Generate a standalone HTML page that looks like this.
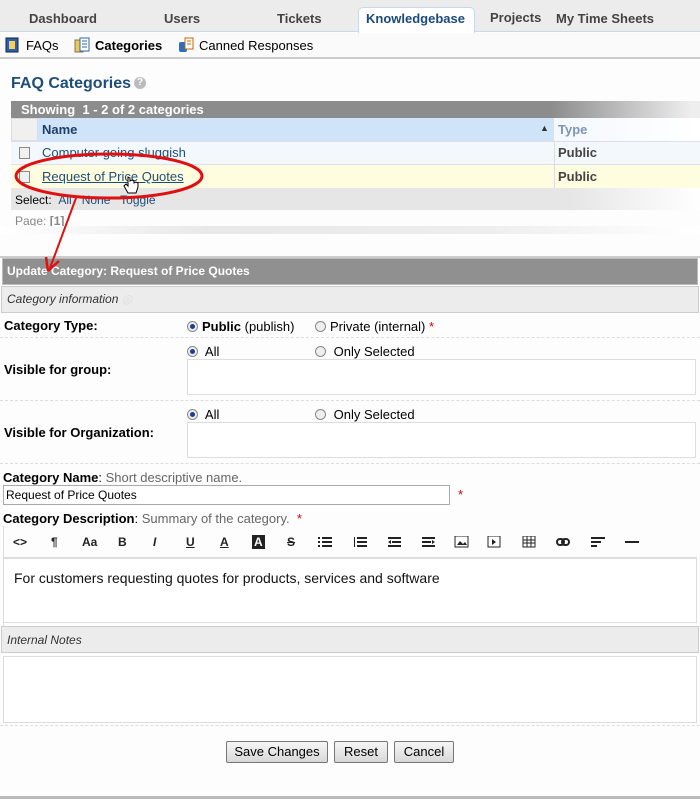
<!DOCTYPE html>
<html><head><meta charset="utf-8">
<style>
*{box-sizing:border-box;margin:0;padding:0}
body{width:700px;height:799px;background:#fdfdfd;font-family:"Liberation Sans",Arial,sans-serif;font-size:13px;color:#000;position:relative;overflow:hidden}
.a{position:absolute;white-space:nowrap}
.tab{position:absolute;top:11px;font-size:13px;font-weight:bold;color:#444}
.rad{display:inline-block;width:11px;height:11px;border-radius:50%;border:1px solid #888;background:#eee;vertical-align:-1px;margin-right:4px;position:relative}
.rad.on::after{content:"";position:absolute;left:2px;top:2px;width:5px;height:5px;border-radius:50%;background:#1a3d8f}
.chk{position:absolute;width:11px;height:12px;border:1px solid #888;background:#f0f0f0}
.box{position:absolute;border:1px solid #ddd;background:#fff}
.dash{position:absolute;left:0;width:700px;border-top:1px dashed #ddd}
.tb{position:absolute;top:535px;font-size:12px;font-weight:bold;color:#222}
.btn{position:absolute;top:741px;height:22px;border:1px solid #777;border-radius:2px;background:linear-gradient(#f6f6f6,#d8d8d8);font-size:13px;text-align:center;line-height:20px}
</style></head><body>
<div class="a" style="left:0;top:0;width:700px;height:32px;background:#ececec;border-bottom:1px solid #c8d8e8"></div>
<div class="tab" style="left:29px">Dashboard</div>
<div class="tab" style="left:164px">Users</div>
<div class="tab" style="left:277px">Tickets</div>
<div class="a" style="left:358px;top:7px;width:117px;height:26px;background:#fff;border:1px solid #c8d8e8;border-bottom:none;border-radius:5px 5px 0 0"></div>
<div class="tab" style="left:366px;color:#1a4a7a">Knowledgebase</div>
<div class="tab" style="left:490px;top:10px">Projects</div>
<div class="tab" style="left:556px">My Time Sheets</div>
<div class="a" style="left:0;top:33px;width:700px;height:26px;background:#fafafa;border-bottom:2px solid #ccc"></div>
<svg class="a" style="left:5px;top:37px" width="14" height="16"><rect x="1" y="1" width="12" height="14" fill="#2b5fb0" stroke="#123"/><rect x="4" y="4" width="6" height="8" fill="#f5d060"/></svg>
<div class="a" style="left:26px;top:38px">FAQs</div>
<svg class="a" style="left:74px;top:37px" width="16" height="16"><rect x="1" y="3" width="8" height="12" fill="#e8c860" stroke="#875"/><rect x="6" y="1" width="9" height="13" fill="#fff" stroke="#36a"/><path d="M8 4h5M8 7h5M8 10h5" stroke="#36a"/></svg>
<div class="a" style="left:95px;top:38px;font-weight:bold">Categories</div>
<svg class="a" style="left:178px;top:37px" width="16" height="16"><rect x="1" y="5" width="8" height="10" rx="2" fill="#2b6fc0"/><rect x="7" y="1" width="8" height="11" fill="#fff" stroke="#c60"/><path d="M9 4h4M9 7h4" stroke="#c60"/></svg>
<div class="a" style="left:199px;top:38px">Canned Responses</div>
<div class="a" style="left:11px;top:75px;font-size:16px;font-weight:bold;color:#1f4d7a">FAQ Categories</div>
<div class="a" style="left:134px;top:77px;width:12px;height:12px;border-radius:50%;background:#bbb;color:#fff;font-size:10px;font-weight:bold;text-align:center;line-height:12px">?</div>
<div class="a" style="left:11px;top:101px;width:689px;height:17px;background:linear-gradient(90deg,#8c8c8c 0,#8c8c8c 540px,#eee 680px)"></div>
<div class="a" style="left:21px;top:102px;color:#fff;font-weight:bold">Showing&nbsp; 1 - 2 of 2 categories</div>
<div class="a" style="left:11px;top:118px;width:27px;height:23px;background:#f0f0f0;border:1px solid #ddd"></div>
<div class="a" style="left:38px;top:118px;width:516px;height:23px;background:#cfe4f8"></div>
<div class="a" style="left:42px;top:122px;font-weight:bold;color:#1f3f6a">Name</div>
<div class="a" style="left:540px;top:123px;font-size:9px;color:#333">▲</div>
<div class="a" style="left:554px;top:118px;width:146px;height:23px;background:linear-gradient(90deg,#f4f8fc,#fff)"></div>
<div class="a" style="left:558px;top:122px;color:#7e95b5;font-weight:bold">Type</div>
<div class="a" style="left:11px;top:141px;width:689px;height:23px;background:#f3f8fc;border-top:1px solid #dde"></div>
<div class="chk" style="left:19px;top:147px"></div>
<div class="a" style="left:42px;top:145px;color:#1f4d7a">Computer going sluggish</div>
<div class="a" style="left:558px;top:145px;font-weight:bold;color:#444">Public</div>
<div class="a" style="left:11px;top:164px;width:689px;height:24px;background:#fffde0;border-top:1px solid #dde"></div>
<div class="chk" style="left:19px;top:171px"></div>
<div class="a" style="left:42px;top:169px;color:#1f4d7a;text-decoration:underline">Request of Price Quotes</div>
<div class="a" style="left:558px;top:169px;font-weight:bold;color:#444">Public</div>
<div class="a" style="left:554px;top:141px;width:1px;height:47px;background:#ddd"></div>
<div class="a" style="left:11px;top:188px;width:689px;height:22px;background:linear-gradient(90deg,#e6e6e6,#e6e6e6 560px,#fff)"></div>
<div class="a" style="left:15px;top:193px;font-size:12px">Select: &nbsp;<span style="color:#1f4d7a">All &nbsp; None &nbsp; Toggle</span></div>
<div class="a" style="left:15px;top:214px;font-size:12px;color:#888">Page: <b>[1]</b></div>
<div class="a" style="left:0;top:226px;width:700px;height:8px;background:linear-gradient(90deg,#fff,#e8e8e8 30%,#eee 70%,#fff)"></div>
<div class="a" style="left:0;top:256px;width:700px;height:2px;background:#ccc"></div>
<div class="a" style="left:2px;top:258px;width:696px;height:27px;background:#909090;border:1px solid #bbb"></div>
<div class="a" style="left:7px;top:264px;color:#fff;font-weight:bold;font-size:12px">Update Category: Request of Price Quotes</div>
<svg class="a" style="left:0;top:140px;z-index:5" width="220" height="135">
<ellipse cx="109" cy="36" rx="93" ry="22" fill="none" stroke="#e01010" stroke-width="3"/>
<path d="M76 58 L50 128" stroke="#e01010" stroke-width="2"/>
<path d="M48 131 L46 117 M48 131 L59 121" stroke="#e01010" stroke-width="2.5" fill="none"/>
</svg>
<svg class="a" style="left:123px;top:176px;z-index:6" width="16" height="20"><path d="M5 1v9l-2-2-2 2 4 7h8l2-6v-4l-2-1-2 1V5l-2-1-2 1V2z" fill="#fff" stroke="#000"/></svg>
<div class="a" style="left:1px;top:286px;width:698px;height:27px;background:#ececec;border:1px solid #ccc"></div>
<div class="a" style="left:7px;top:292px;font-style:italic;font-size:12px;color:#333">Category information <span style="color:#ddd">◎</span></div>
<div class="a" style="left:4px;top:318px;font-weight:bold">Category Type:</div>
<div class="a" style="left:187px;top:319px"><span class="rad on"></span><b>Public</b> (publish)</div>
<div class="a" style="left:315px;top:319px"><span class="rad"></span>Private (internal) <span style="color:#d00">*</span></div>
<div class="dash" style="top:337px"></div>
<div class="a" style="left:187px;top:344px"><span class="rad on"></span> All</div>
<div class="a" style="left:315px;top:344px"><span class="rad"></span> Only Selected</div>
<div class="box" style="left:187px;top:359px;width:509px;height:36px"></div>
<div class="a" style="left:4px;top:362px;font-weight:bold">Visible for group:</div>
<div class="dash" style="top:400px"></div>
<div class="a" style="left:187px;top:407px"><span class="rad on"></span> All</div>
<div class="a" style="left:315px;top:407px"><span class="rad"></span> Only Selected</div>
<div class="box" style="left:187px;top:422px;width:509px;height:36px"></div>
<div class="a" style="left:4px;top:425px;font-weight:bold">Visible for Organization:</div>
<div class="dash" style="top:463px"></div>
<div class="a" style="left:3px;top:470px"><b>Category Name</b>: <span style="color:#666">Short descriptive name.</span></div>
<div class="a" style="left:3px;top:485px;width:447px;height:20px;border:1px solid #aaa;background:#fff;padding:2px 2px;font-size:12px">Request of Price Quotes</div>
<div class="a" style="left:458px;top:487px;color:#d00">*</div>
<div class="a" style="left:3px;top:511px"><b>Category Description</b>: <span style="color:#666">Summary of the category.</span> &nbsp;<span style="color:#d00">*</span></div>
<div class="a" style="left:3px;top:526px;width:1px;height:100px;background:#ddd"></div>
<div class="tb" style="left:13px">&lt;&gt;</div>
<div class="tb" style="left:51px">¶</div>
<div class="tb" style="left:82px">Aa</div>
<div class="tb" style="left:118px">B</div>
<div class="tb" style="left:153px;font-style:italic">I</div>
<div class="tb" style="left:186px;text-decoration:underline">U</div>
<div class="tb" style="left:220px;text-decoration:underline">A</div>
<div class="tb" style="left:252px;background:#222;color:#fff;padding:0 2px">A</div>
<div class="tb" style="left:287px;text-decoration:line-through">S</div>
<svg class="a" style="left:318px;top:536px" width="360" height="12" fill="#222">
<rect x="0" y="1" width="2" height="2"/><rect x="4" y="1" width="10" height="2"/><rect x="0" y="5" width="2" height="2"/><rect x="4" y="5" width="10" height="2"/><rect x="0" y="9" width="2" height="2"/><rect x="4" y="9" width="10" height="2"/>
<rect x="36" y="1" width="1" height="10"/><rect x="39" y="1" width="10" height="2"/><rect x="39" y="5" width="10" height="2"/><rect x="39" y="9" width="10" height="2"/>
<rect x="70" y="1" width="13" height="2"/><rect x="74" y="5" width="9" height="2"/><rect x="70" y="9" width="13" height="2"/><path d="M70 6l3-2v4z"/>
<rect x="104" y="1" width="13" height="2"/><rect x="104" y="5" width="9" height="2"/><rect x="104" y="9" width="13" height="2"/><path d="M117 6l-3-2v4z"/>
<rect x="137" y="0" width="13" height="11" fill="none" stroke="#222"/><path d="M139 9l3-4 3 3 2-2 2 3z"/>
<rect x="170" y="0" width="12" height="11" fill="none" stroke="#222"/><path d="M174 3v6l4-3z"/>
<rect x="205" y="0" width="12" height="11" fill="none" stroke="#222"/><path d="M205 4h12M205 7h12M209 0v11M213 0v11" stroke="#222"/>
<rect x="239" y="3" width="7" height="6" rx="3" fill="none" stroke="#222" stroke-width="2"/><rect x="244" y="3" width="7" height="6" rx="3" fill="none" stroke="#222" stroke-width="2"/>
<rect x="273" y="1" width="14" height="2"/><rect x="273" y="5" width="10" height="2"/><rect x="273" y="9" width="6" height="2"/>
<rect x="307" y="5" width="14" height="2"/>
</svg>
<div class="box" style="left:3px;top:557px;width:694px;height:66px;border-top:2px solid #ddd"></div>
<div class="a" style="left:14px;top:570px;font-size:14px;color:#111">For customers requesting quotes for products, services and software</div>
<div class="a" style="left:1px;top:626px;width:698px;height:27px;background:#ececec;border:1px solid #ccc"></div>
<div class="a" style="left:7px;top:633px;font-style:italic;font-size:12px;color:#333">Internal Notes</div>
<div class="box" style="left:3px;top:656px;width:694px;height:67px"></div>
<div class="dash" style="top:725px"></div>
<div class="btn" style="left:226px;width:102px">Save Changes</div>
<div class="btn" style="left:334px;width:54px">Reset</div>
<div class="btn" style="left:394px;width:60px">Cancel</div>
<div class="a" style="left:0;top:796px;width:700px;height:3px;background:#bbb"></div>
</body></html>
